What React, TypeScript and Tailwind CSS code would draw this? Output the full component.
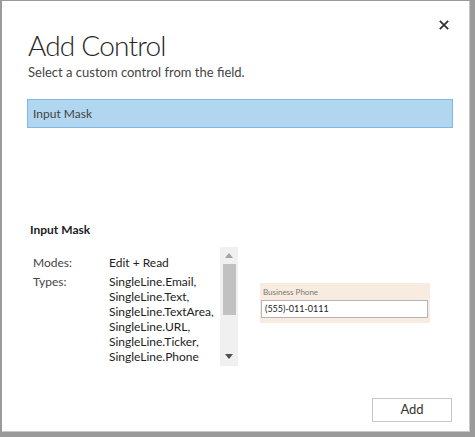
import React from "react";

export default function App() {
  const types = [
    "SingleLine.Email,",
    "SingleLine.Text,",
    "SingleLine.TextArea,",
    "SingleLine.URL,",
    "SingleLine.Ticker,",
    "SingleLine.Phone",
  ];
  return (
    <div
      className="w-[475px] h-[437px] bg-[#9a9a9a] pl-[2px] pt-[1px] overflow-hidden"
      style={{ fontFamily: 'Lato, "Noto Sans", sans-serif' }}
    >
      <div className="relative w-[468px] h-[431px] bg-white border-r border-b border-[#c8c8c8]">
        <button className="absolute left-[437px] top-[19px] w-[10px] h-[10px] flex items-center justify-center">
          <svg width="10" height="10" viewBox="0 0 10 10">
            <path d="M0.8 0.8 L9.2 9.2 M9.2 0.8 L0.8 9.2" stroke="#333" strokeWidth="1.8" />
          </svg>
        </button>
        <div className="pt-[27px] pl-[25px]">
          <h1 className="pl-[1px] text-[28px] leading-[34px] font-light text-[#262626] tracking-[-0.8px]">Add Control</h1>
          <p className="pl-[1px] mt-[1px] text-[13px] leading-[18px] text-[#444]">Select a custom control from the field.</p>
          <div className="mt-[18px] w-[426px] h-[29px] bg-[#b1d6f0] border border-[#82b6e6] flex items-center pl-[5px] text-[12px] text-[#444]">
            Input Mask
          </div>
          <div className="mt-[94px] pl-[3px] text-[12px] font-bold text-[#222] leading-[16px]">Input Mask</div>
          <div className="mt-[9px] flex">
            <div className="w-[193px] pl-[6px] pt-[8px] text-[12px] leading-[15px] text-[#444]">
              <div className="flex">
                <div className="w-[76px]">Modes:</div>
                <div className="text-[#222]">Edit + Read</div>
              </div>
              <div className="flex mt-[4px]">
                <div className="w-[76px]">Types:</div>
                <div className="text-[#222]">
                  {types.map((t) => (
                    <div key={t}>{t}</div>
                  ))}
                </div>
              </div>
            </div>
            <div className="w-[18px] h-[119px] bg-[#f0f0f0] flex flex-col items-center">
              <svg width="8" height="5" viewBox="0 0 8 5" className="mt-[6px]">
                <path d="M0 5 L4 0 L8 5 Z" fill="#a3a3a3" />
              </svg>
              <div className="mt-[6px] w-[13px] h-[51px] bg-[#c1c1c1]" />
              <div className="flex-1" />
              <svg width="8" height="5" viewBox="0 0 8 5" className="mb-[7px]">
                <path d="M0 0 L8 0 L4 5 Z" fill="#505050" />
              </svg>
            </div>
            <div className="ml-[22px] mt-[36px] w-[170px] h-[40px] bg-[#f8ebdf] pl-[1px] pt-[4px]">
              <div className="text-[8px] leading-[10px] text-[#777] pl-[2px]">Business Phone</div>
              <div className="mt-[3px] w-[167px] h-[18px] bg-white border border-[#b5b5b5] flex items-center pl-[3px] text-[9px] text-[#222]">
                (555)-011-0111
              </div>
            </div>
          </div>
        </div>
        <button className="absolute left-[370px] top-[397px] w-[80px] h-[24px] border border-[#c6c6c6] bg-white text-[13px] text-[#333] flex items-center justify-center">
          Add
        </button>
      </div>
    </div>
  );
}
